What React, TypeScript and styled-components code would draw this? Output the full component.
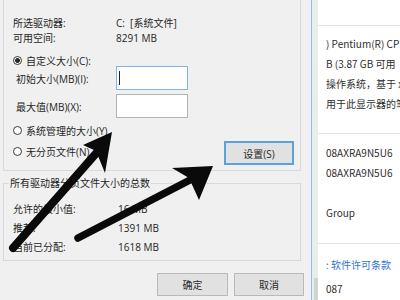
import React from "react";
import styled, { createGlobalStyle } from "styled-components";

const GlobalStyle = createGlobalStyle`
  html, body { margin: 0; padding: 0; background: #f0f0f0; }
  #root { width: 400px; height: 300px; overflow: hidden; }
  * { box-sizing: border-box; }
`;

const Screen = styled.div`
  position: relative;
  display: flex;
  width: 400px;
  height: 300px;
  overflow: hidden;
  font-family: "Open Sans", "Noto Sans CJK SC", sans-serif;
  font-size: 10px;
  color: #262626;
`;

const Dialog = styled.div`
  width: 311px;
  flex: none;
  display: flex;
  flex-direction: column;
  padding: 0 7px 0 3px;
  background: #f0f0f0;
`;

const DriveBox = styled.div`
  width: 298px;
  height: 171px;
  flex: none;
  border: 1px solid #d9d9d9;
  border-top: none;
  padding: 16px 6px 0 9px;
  display: flex;
  flex-direction: column;
`;

const InfoGrid = styled.div`
  display: grid;
  grid-template-columns: 103px auto;
  line-height: 15px;
  white-space: nowrap;
`;

const RadioRow = styled.label<{ $height: number; $top?: number }>`
  display: flex;
  align-items: center;
  gap: 4px;
  height: ${(p) => p.$height}px;
  margin-top: ${(p) => p.$top ?? 0}px;
  white-space: nowrap;
`;

const RadioDot = styled.span<{ $checked?: boolean }>`
  width: 9px;
  height: 9px;
  flex: none;
  border-radius: 50%;
  border: 1px solid #3a3a3a;
  background: ${(p) =>
    p.$checked
      ? "radial-gradient(circle, #2a2a2a 0 2.1px, #ffffff 2.7px)"
      : "#ffffff"};
`;

const SizeGrid = styled.div`
  display: grid;
  grid-template-columns: 100px 72px;
  row-gap: 4px;
  align-items: center;
  padding-left: 3px;
  white-space: nowrap;
`;

const Field = styled.div<{ $focused?: boolean }>`
  height: 24px;
  display: flex;
  align-items: center;
  background: #ffffff;
  border: 1px solid ${(p) => (p.$focused ? "#7db5ea" : "#b4b4b4")};
`;

const Caret = styled.span`
  width: 1px;
  height: 14px;
  margin-left: 2px;
  background: #222;
`;

const LowerRow = styled.div`
  display: flex;
  justify-content: space-between;
  align-items: flex-start;
  margin-top: 2px;
`;

const RadioStack = styled.div`
  display: flex;
  flex-direction: column;
`;

const PushButton = styled.div<{ $default?: boolean; $width: number; $height: number; $top?: number }>`
  width: ${(p) => p.$width}px;
  height: ${(p) => p.$height}px;
  margin-top: ${(p) => p.$top ?? 0}px;
  display: flex;
  align-items: center;
  justify-content: center;
  background: #e1e1e1;
  border: ${(p) => (p.$default ? "2px solid #5ea0dc" : "1px solid #b9b9b9")};
  color: #2a2a2a;
  white-space: nowrap;
`;

const TotalsBox = styled.fieldset`
  width: 298px;
  height: 85px;
  flex: none;
  margin: 5px 0 0 0;
  padding: 0;
  min-width: 0;
  border: 1px solid #d9d9d9;
`;

const TotalsLegend = styled.legend`
  margin-left: 5px;
  padding: 0 1px;
  line-height: 14px;
  white-space: nowrap;
`;

const TotalsGrid = styled.div`
  display: grid;
  grid-template-columns: 105px auto;
  grid-auto-rows: 19px;
  align-items: center;
  padding: 9px 0 0 9px;
  white-space: nowrap;
`;

const Footer = styled.div`
  display: flex;
  justify-content: flex-end;
  gap: 6px;
  margin-top: 12px;
`;

const BlueEdge = styled.div`
  width: 1px;
  flex: none;
  background: #92bfe9;
`;

const Gutter = styled.div`
  width: 6px;
  flex: none;
  display: flex;
  flex-direction: column;
  justify-content: flex-end;
  background: #ececec;
`;

const GutterThumb = styled.div`
  height: 22px;
  margin-left: 2px;
  background: #d2d2d2;
`;

const InfoPanel = styled.div`
  flex: 1;
  min-width: 0;
  display: flex;
  flex-direction: column;
  background: #ffffff;
  overflow: hidden;
  font-family: "Noto Sans CJK SC", "Open Sans", sans-serif;
  font-size: 10px;
  color: #2e2e2e;
  white-space: nowrap;
`;

const InfoSection = styled.div<{ $height?: number; $padTop?: number; $last?: boolean }>`
  flex: none;
  height: ${(p) => (p.$height ? `${p.$height}px` : "auto")};
  padding: ${(p) => p.$padTop ?? 0}px 0 0 8px;
  border-bottom: ${(p) => (p.$last ? "none" : "1px solid #e4e4e4")};
`;

const InfoLine = styled.div<{ $lh: number; $link?: boolean }>`
  height: ${(p) => p.$lh}px;
  line-height: ${(p) => p.$lh}px;
  color: ${(p) => (p.$link ? "#2f74cf" : "inherit")};
`;

const ArrowLayer = styled.svg`
  position: absolute;
  left: 0;
  top: 0;
  width: 400px;
  height: 300px;
  pointer-events: none;
`;

export default function App() {
  return (
    <>
      <GlobalStyle />
      <Screen>
        <Dialog>
          <DriveBox>
            <InfoGrid>
              <span>所选驱动器:</span>
              <span>C:&nbsp;&nbsp;[系统文件]</span>
              <span>可用空间:</span>
              <span>8291 MB</span>
            </InfoGrid>
            <RadioRow $height={12} $top={8}>
              <RadioDot $checked />
              <span>自定义大小(C):</span>
            </RadioRow>
            <SizeGrid>
              <span>初始大小(MB)(I):</span>
              <Field $focused>
                <Caret />
              </Field>
              <span>最大值(MB)(X):</span>
              <Field />
            </SizeGrid>
            <LowerRow>
              <RadioStack>
                <RadioRow $height={21}>
                  <RadioDot />
                  <span>系统管理的大小(Y)</span>
                </RadioRow>
                <RadioRow $height={21}>
                  <RadioDot />
                  <span>无分页文件(N)</span>
                </RadioRow>
              </RadioStack>
              <PushButton $default $width={70} $height={24} $top={21}>
                设置(S)
              </PushButton>
            </LowerRow>
          </DriveBox>
          <TotalsBox>
            <TotalsLegend>所有驱动器分页文件大小的总数</TotalsLegend>
            <TotalsGrid>
              <span>允许的最小值:</span>
              <span>16 MB</span>
              <span>推荐:</span>
              <span>1391 MB</span>
              <span>当前已分配:</span>
              <span>1618 MB</span>
            </TotalsGrid>
          </TotalsBox>
          <Footer>
            <PushButton $width={71} $height={23}>确定</PushButton>
            <PushButton $width={70} $height={23}>取消</PushButton>
          </Footer>
        </Dialog>
        <BlueEdge />
        <Gutter>
          <GutterThumb />
        </Gutter>
        <InfoPanel>
          <InfoSection $height={26} />
          <InfoSection $height={108} $padTop={8}>
            <InfoLine $lh={20}>) Pentium(R) CPU</InfoLine>
            <InfoLine $lh={20}>B (3.87 GB 可用</InfoLine>
            <InfoLine $lh={20}>操作系统，基于 x</InfoLine>
            <InfoLine $lh={20}>用于此显示器的笔</InfoLine>
          </InfoSection>
          <InfoSection $height={110} $padTop={9}>
            <InfoLine $lh={20}>08AXRA9N5U6</InfoLine>
            <InfoLine $lh={20}>08AXRA9N5U6</InfoLine>
            <InfoLine $lh={20} />
            <InfoLine $lh={20}>Group</InfoLine>
          </InfoSection>
          <InfoSection $padTop={9} $last>
            <InfoLine $lh={24} $link>: 软件许可条款</InfoLine>
            <InfoLine $lh={24}>087</InfoLine>
          </InfoSection>
        </InfoPanel>
        <ArrowLayer viewBox="0 0 400 300">
          <line x1="13" y1="248" x2="99" y2="150" stroke="#0a0a0a" strokeWidth="8" strokeLinecap="round" />
          <polygon points="112,132 83,145 96,151 105,173" fill="#0a0a0a" />
          <line x1="78" y1="238" x2="190" y2="180" stroke="#0a0a0a" strokeWidth="7.5" strokeLinecap="round" />
          <polygon points="213,166 172,168 189,178 199,200" fill="#0a0a0a" />
        </ArrowLayer>
      </Screen>
    </>
  );
}
